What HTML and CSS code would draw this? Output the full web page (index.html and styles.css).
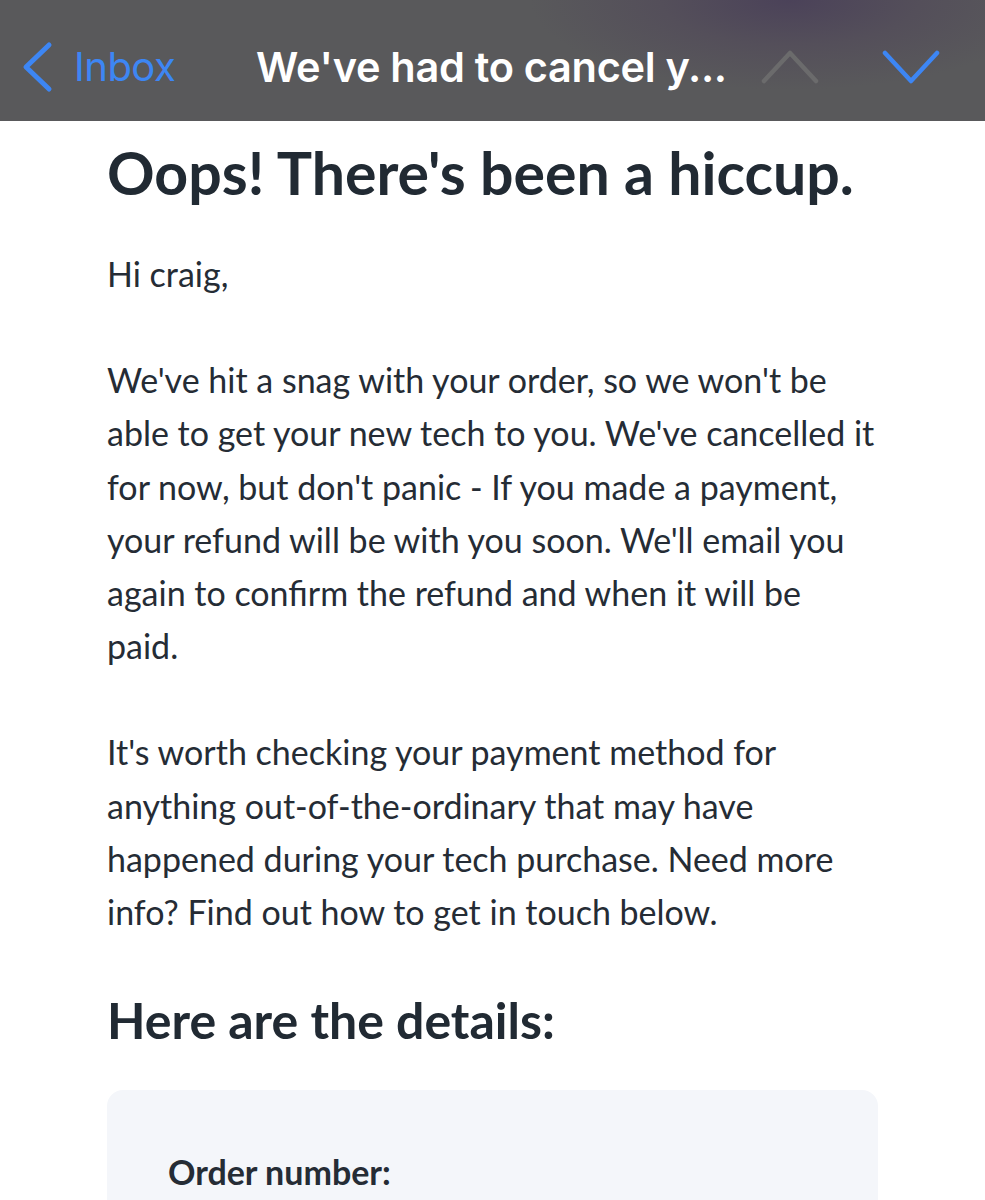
FILE: index.html
```html
<!DOCTYPE html>
<html lang="en">
<head>
<meta charset="utf-8">
<title>We've had to cancel your order</title>
<link rel="stylesheet" href="styles.css">
</head>
<body>
<header class="navbar">
  <div class="nav-back">
    <svg class="chev-back" width="34" height="52" viewBox="0 0 34 52"><path d="M28 4 L5 26 L28 48" fill="none" stroke="#3d86f4" stroke-width="5" stroke-linecap="round" stroke-linejoin="round"/></svg>
    <span class="back-label">Inbox</span>
  </div>
  <div class="nav-title">We've had to cancel y...</div>
  <div class="nav-arrows">
    <svg class="chev" width="58" height="36" viewBox="0 0 58 36"><path d="M3 32 L29 4 L55 32" fill="none" stroke="#6b6b6c" stroke-width="4.5" stroke-linecap="round" stroke-linejoin="round"/></svg>
    <svg class="chev" width="58" height="36" viewBox="0 0 58 36"><path d="M3 4 L29 32 L55 4" fill="none" stroke="#3d86f4" stroke-width="4.5" stroke-linecap="round" stroke-linejoin="round"/></svg>
  </div>
</header>
<main class="email">
  <h1 class="title">Oops! There's been a hiccup.</h1>
  <p class="para">Hi craig,</p>
  <p class="para">We've hit a snag with your order, so we won't be<br>able to get your new tech to you. We've cancelled it<br>for now, but don't panic - If you made a payment,<br>your refund will be with you soon. We'll email you<br>again to confirm the refund and when it will be<br>paid.</p>
  <p class="para">It's worth checking your payment method for<br>anything out-of-the-ordinary that may have<br>happened during your tech purchase. Need more<br>info? Find out how to get in touch below.</p>
  <h2 class="subtitle">Here are the details:</h2>
  <section class="details">
    <div class="detail-label">Order number:</div>
  </section>
</main>
</body>
</html>
```
FILE: styles.css
```css
html, body {
  margin: 0;
  padding: 0;
  background: #ffffff;
}
body {
  width: 985px;
  height: 1200px;
  overflow: hidden;
}
.navbar {
  height: 121px;
  box-sizing: border-box;
  padding-top: 12px;
  display: flex;
  align-items: center;
  background: radial-gradient(ellipse 260px 90px at 790px 0px, #4b4259 0%, #544f5a 50%, rgba(89,89,91,0) 100%), #59595b;
  font-family: Inter, "Liberation Sans", sans-serif;
}
.nav-back {
  display: flex;
  align-items: center;
  padding-left: 21px;
  gap: 19px;
  width: 230px;
}
.back-label {
  color: #3d86f4;
  font-size: 40px;
  font-weight: 400;
  letter-spacing: -0.5px;
}
.nav-title {
  color: #ffffff;
  font-size: 41.5px;
  font-weight: 600;
  letter-spacing: -0.3px;
  margin-left: 5px;
  white-space: nowrap;
}
.nav-arrows {
  display: flex;
  align-items: center;
  gap: 63px;
  margin-left: 34px;
}
.email {
  padding: 0 0 0 107px;
  font-family: Lato, "Open Sans", sans-serif;
  color: #252c35;
}
.title {
  margin: 18px 0 0 0;
  font-size: 59px;
  font-weight: 700;
  line-height: 68px;
  color: #212a33;
}
.para {
  margin: 53px 0 0 0;
  font-size: 34px;
  line-height: 53.2px;
  white-space: nowrap;
}
.title + .para {
  margin-top: 40px;
}
.subtitle {
  margin: 53px 0 0 0;
  font-size: 50px;
  font-weight: 700;
  line-height: 58px;
  color: #212a33;
}
.details {
  margin-top: 41px;
  width: 771px;
  height: 160px;
  background: #f4f6fa;
  border-radius: 16px;
  padding: 62px 0 0 61px;
  box-sizing: border-box;
}
.detail-label {
  font-size: 34px;
  font-weight: 700;
  line-height: 40px;
  color: #252c35;
}
```
